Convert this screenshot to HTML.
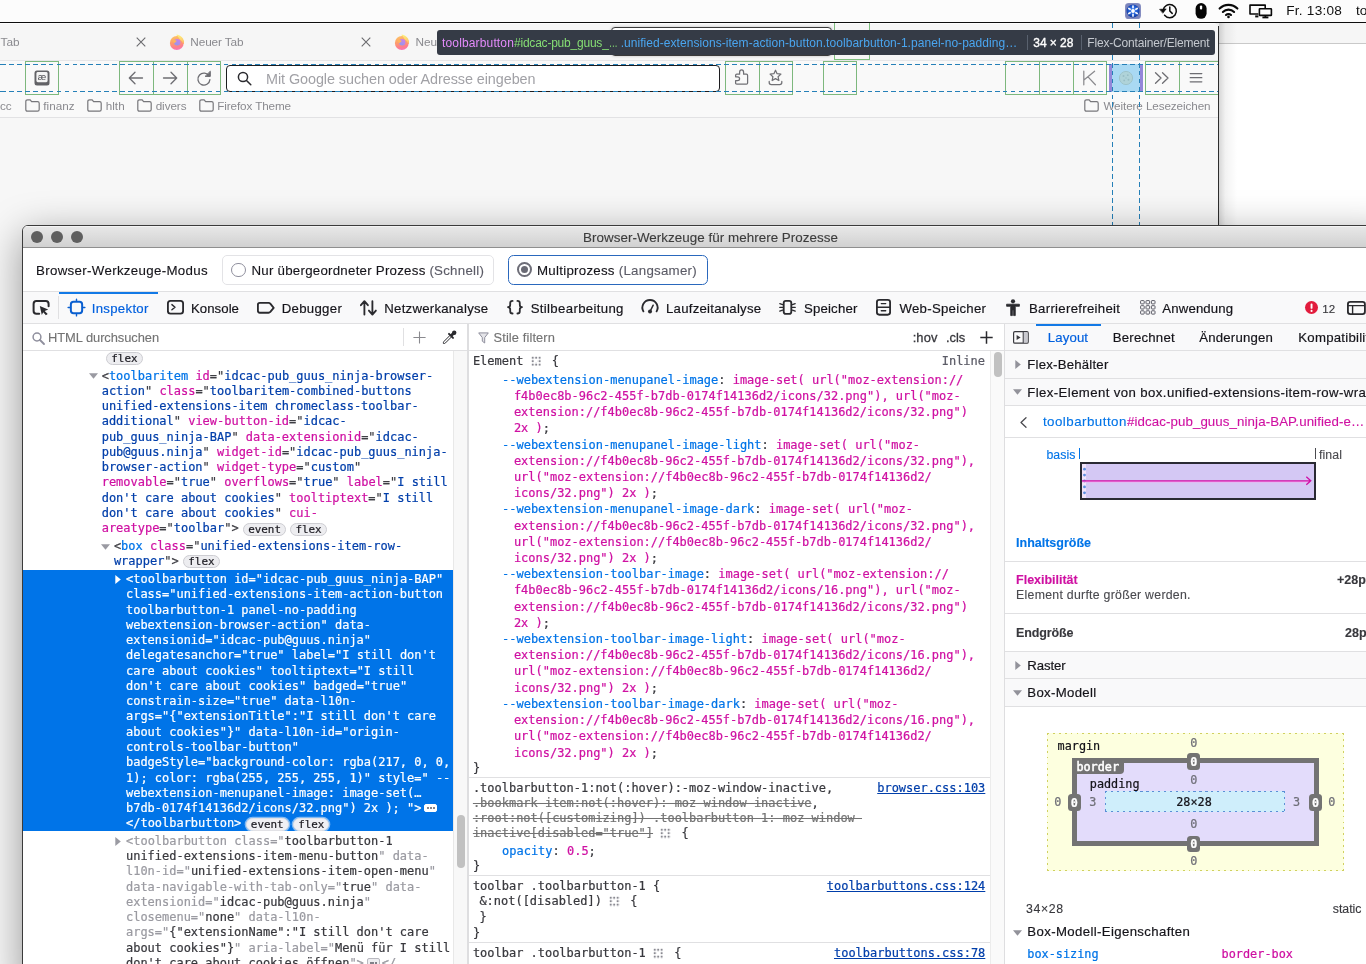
<!DOCTYPE html>
<html lang="de">
<head>
<meta charset="utf-8">
<title>Browser-Werkzeuge für mehrere Prozesse</title>
<style>
*{box-sizing:border-box}
html,body{margin:0;padding:0}
body{width:1366px;height:964px;position:relative;overflow:hidden;background:#ececec;font-family:"Liberation Sans",sans-serif;font-size:12px;color:#15141a;-webkit-font-smoothing:antialiased}
.abs{position:absolute}
#dt,#browser,#menubar{will-change:transform}
.t{position:absolute;white-space:nowrap;line-height:1}
.mono{font-family:"DejaVu Sans Mono","Liberation Mono",monospace}
svg{position:absolute;overflow:visible}
/* ---------- menubar ---------- */
#menubar{left:0;top:0;width:1366px;height:22px;background:#fcfcfc}
#menuline{left:0;top:22px;width:1366px;height:1px;background:#0e0e0e}
/* ---------- back window (right) ---------- */
#backwin{left:1219px;top:23px;width:147px;height:202px;background:#fff}
#backwin .bar{left:0;top:0;width:147px;height:21px;background:#f6f6f6;border-bottom:1px solid #c9c9c9}
#backwin .sh{left:0;top:0;width:18px;height:202px;background:linear-gradient(90deg,rgba(0,0,0,.16),rgba(0,0,0,.05) 35%,rgba(0,0,0,0))}
/* ---------- browser window ---------- */
#browser{left:0;top:23px;width:1218px;height:960px;background:#f7f7f7;border-top-right-radius:5px;overflow:hidden}
#browser-edge{left:1218px;top:26px;width:1px;height:940px;background:#2e2e2e}
.bt{color:#8a8a8f;font-size:11.8px}
.gbox{position:absolute;top:38px;height:34px;border:1px solid #7db87d}
.hdash{position:absolute;left:0;width:1218px;height:1px;background:repeating-linear-gradient(90deg,#2580b8 0 4.8px,transparent 4.8px 7.95px) 1px 0}
.vdash{position:absolute;top:0;height:202px;width:1px;background:repeating-linear-gradient(180deg,#2580b8 0 4.8px,transparent 4.8px 7.95px)}
#infobar{left:437px;top:7px;width:778px;height:25px;background:#353b46;border-radius:3px}
#infobar .t{top:6.5px;font-size:12px}
/* ---------- devtools window ---------- */
#dt{left:22px;top:225px;width:1376px;height:760px;background:#fff;border:1px solid #3b3b3b;border-radius:6px 6px 0 0;overflow:hidden;box-shadow:0 10px 40px rgba(0,0,0,.4)}
#dtshadow{display:none}
#titlebar{left:0;top:0;width:1376px;height:22px;background:linear-gradient(#e8e8e8,#d1d1d1);border-bottom:1px solid #8f8f8f;box-shadow:inset 0 1px 0 #f4f4f4}
.tl{position:absolute;top:5px;width:12px;height:12px;border-radius:50%;background:#5f5f5f}
.tab{font-size:13.2px;letter-spacing:.25px}
.sh{font-size:13.2px;color:#15141a;letter-spacing:.25px}
.b{font-weight:bold}
.mk{position:absolute;white-space:pre;font-family:"DejaVu Sans Mono","Liberation Mono",monospace;font-size:11.97px;line-height:15.27px;color:#4a4a4f}
.mk .p{color:#3e3e44}.mk .tg{color:#0074e8}.mk .an{color:#cf10a2}.mk .av{color:#003eaa}
.mk.sel,.mk.sel span{color:#fff}
.mk.hid,.mk.hid .p,.mk.hid .tg,.mk.hid .an{color:#9a9aa1}.mk.hid .av{color:#38383d}
.bdg{display:inline-block;height:13px;line-height:11.5px;font-size:10.9px;padding:0 4px;margin-left:4.5px;border:1px solid #cdcdd2;border-radius:7px;background:#ededf0;color:#1c1b22!important;vertical-align:-0.3px;margin-right:0}
.mk.sel .bdg{background:#f0f0f4;border-color:#e2e2e6;color:#1c1b22!important;box-shadow:0 0 0 1.3px rgba(255,255,255,.5)}
.ell{display:inline-block;width:13px;height:8.5px;border-radius:2px;background:#ededf0;border:1px solid #b9b9c0;margin:0 2px 0 3px;vertical-align:0;position:relative}
.ell i{position:absolute;top:2.3px;width:2px;height:2px;border-radius:50%;background:#5b5b66}
.ell i:nth-child(1){left:1.7px}.ell i:nth-child(2){left:4.6px}.ell i:nth-child(3){left:7.5px}
.mk.sel .ell{background:#fff;border-color:#fff}
.rl{position:absolute;white-space:pre;font-size:11.97px;line-height:16px;color:#38383d}
.rl .pn{color:#0074e8}.rl .pv{color:#cf10a2}.rl .pc{color:#38383d}
.rl .un{color:#737373;text-decoration:line-through}
.rl.lnk{color:#003eaa;text-decoration:underline}
.grip{display:inline-block;width:10.4px;height:10.4px;margin:0 3.6px 0 0;vertical-align:-1.5px;background:linear-gradient(#fff,#fff) center/3.4px 3.4px no-repeat,radial-gradient(circle,#8a8a92 0 1.15px,transparent 1.4px) 0 0/3.467px 3.467px}
.bm{font-size:11.8px}
.bm.dk{color:#15141a}.bm.gr{color:#6f6f78}.bm.wh{color:#fff}.bm.bold{font-weight:bold}
.mk,.rl,.bm{-webkit-text-stroke:.22px currentColor}
#dt .t{-webkit-text-stroke:.12px currentColor}
#dt .t.mono,#dt .bm{-webkit-text-stroke:.22px currentColor}
#sHov,#sCls{-webkit-text-stroke:.3px currentColor!important}
#dt .sh,#dt .tab{-webkit-text-stroke:.18px currentColor}
#dt .bm.sb{-webkit-text-stroke:.5px #fff}
#wtitle{letter-spacing:0.039px}
#modelabel{letter-spacing:0.324px}
#m1{letter-spacing:0.240px}
#m2{letter-spacing:0.262px}
#tI{letter-spacing:0.306px}
#tK{letter-spacing:0.047px}
#tD{letter-spacing:0.310px}
#tN{letter-spacing:0.245px}
#tS{letter-spacing:0.341px}
#tL{letter-spacing:0.250px}
#tSp{letter-spacing:0.180px}
#tW{letter-spacing:0.281px}
#tB{letter-spacing:0.300px}
#tA{letter-spacing:0.148px}
#sHtml{letter-spacing:-0.057px}
#sStile{letter-spacing:0.101px}
#sHov{letter-spacing:0.106px}
#sCls{letter-spacing:-0.011px}
#sL{letter-spacing:0.148px}
#sB{letter-spacing:0.231px}
#sA{letter-spacing:0.183px}
#hFB{letter-spacing:0.213px}
#fbasis{letter-spacing:0.096px}
#ffinal{letter-spacing:0.107px}
#fInh{letter-spacing:-0.010px}
#fFlex{letter-spacing:-0.019px}
#fEl{letter-spacing:0.273px}
#fEnd{letter-spacing:-0.155px}
#hR{letter-spacing:-0.091px}
#hBM{letter-spacing:0.323px}
#f34{letter-spacing:0.651px}
#hBME{letter-spacing:0.373px}
#fsel{letter-spacing:0.199px}
#ib1{letter-spacing:0.149px}
#ib2{letter-spacing:-0.217px}
#ib3{letter-spacing:0.051px}
#ib4{letter-spacing:-0.054px}
#ib5{letter-spacing:-0.176px}
#tbN{letter-spacing:-0.124px}
#ph{letter-spacing:-0.065px}
#bkfi{letter-spacing:0.016px}
#bkhl{letter-spacing:0.035px}
#bkdi{letter-spacing:-0.065px}
#bkFi{letter-spacing:-0.111px}
#bkWe{letter-spacing:-0.097px}
#clk{letter-spacing:0.227px}
</style>
</head>
<body>
<div id="menubar" class="abs">
  <!-- blue fan icon -->
  <svg style="left:1125px;top:3px" width="16" height="16" viewBox="0 0 16 16"><defs><radialGradient id="fanG" cx=".5" cy=".45" r=".55"><stop offset="0" stop-color="#4a8df0"/><stop offset=".6" stop-color="#1f5ad0"/><stop offset="1" stop-color="#123a9a"/></radialGradient></defs><rect x="0" y="0" width="16" height="16" rx="3.6" fill="#8990c2"/><rect x=".8" y=".8" width="14.4" height="14.4" rx="3" fill="#7a84bc"/><circle cx="8" cy="8" r="6.5" fill="url(#fanG)"/><g stroke="#fff" stroke-width="1.7" stroke-linecap="round" opacity=".95"><path d="M8 3.1 V4.6"/><path d="M12.2 5.5 L10.9 6.3"/><path d="M12.2 10.5 L10.9 9.7"/><path d="M8 12.9 V11.4"/><path d="M3.8 10.5 L5.1 9.7"/><path d="M3.8 5.5 L5.1 6.3"/></g><circle cx="8" cy="8" r="1.9" fill="#fff"/></svg>
  <!-- time machine clock -->
  <svg style="left:1158px;top:2px" width="20" height="18" viewBox="0 0 20 18" fill="none" stroke="#0c0c0c" stroke-width="1.5" stroke-linecap="round" stroke-linejoin="round"><path d="M5.2 8.1 A6.6 6.6 0 1 1 6.6 13.2"/><path d="M1.9 7.3 L8.2 6.9 L5 11 Z" fill="#0c0c0c" stroke-width=".6"/><path d="M11.8 4.9 V9 L14.2 11.4"/></svg>
  <!-- mouse -->
  <svg style="left:1195px;top:3px" width="12" height="16" viewBox="0 0 12 16"><rect x=".6" y=".1" width="11" height="15.7" rx="5.5" fill="#050505"/><rect x="4.9" y="2.4" width="2.3" height="4.2" rx="1.1" fill="#fff"/></svg>
  <!-- wifi -->
  <svg style="left:1218px;top:3px" width="21" height="16" viewBox="0 0 21 16" fill="none" stroke="#0a0a0a" stroke-width="2.1" stroke-linecap="round"><path d="M1.6 5.6 A12.6 12.6 0 0 1 19.4 5.6"/><path d="M4.9 8.9 A8 8 0 0 1 16.1 8.9"/><path d="M8 12 A3.6 3.6 0 0 1 13 12"/><circle cx="10.5" cy="13.9" r=".6" fill="#0a0a0a" stroke-width="1.4"/></svg>
  <!-- displays -->
  <svg style="left:1248px;top:3px" width="25" height="16" viewBox="0 0 25 16" fill="none" stroke="#0a0a0a" stroke-width="1.6" stroke-linejoin="round"><path d="M10.4 11 H2 V2.1 H17.2 V5"/><path d="M7.2 13.4 H10.4" stroke-width="2"/><rect x="11.4" y="5.8" width="12" height="6.6" rx=".5" fill="#fcfcfc"/><path d="M14.4 14.4 H20.4" stroke-width="1.9"/><path d="M17.4 12.6 V14" stroke-width="1.8"/></svg>
  <div class="t" id="clk" style="left:1286.3px;top:4px;font-size:13.6px;color:#111">Fr. 13:08</div>
  <div class="t" style="left:1356px;top:4px;font-size:13.6px;color:#111">to</div>
</div>
<div id="menuline" class="abs"></div>

<div id="backwin" class="abs"><div class="bar abs"></div><div class="sh abs"></div></div>

<div id="browser" class="abs">
  <div class="abs" style="left:0;top:0;width:1218px;height:37px;background:#f6f6f6;border-top:1px solid #fdfdfd"></div>
  <div class="abs" style="left:0;top:38px;width:1218px;height:56px;background:#f9f9f9"></div>
  <!-- tab strip -->
  <div class="t bt" style="left:0.5px;top:13.8px">Tab</div>
  <svg style="left:136px;top:14px" width="10" height="10" viewBox="0 0 10 10" stroke="#6a6a6e" stroke-width="1.1" fill="none"><path d="M.7 .7 L9.3 9.3 M9.3 .7 L.7 9.3"/></svg>
  <svg class="ffx" style="left:169px;top:11px" width="16" height="16" viewBox="0 0 16 16"><defs><linearGradient id="fx1" x1=".3" y1="0" x2=".5" y2="1"><stop offset="0" stop-color="#ffb648"/><stop offset=".45" stop-color="#ff8a50"/><stop offset=".8" stop-color="#ff6478"/><stop offset="1" stop-color="#f85aa8"/></linearGradient><linearGradient id="fx2" x1="0" y1="0" x2="0" y2="1"><stop offset="0" stop-color="#fff36a"/><stop offset="1" stop-color="#ffb13c"/></linearGradient><linearGradient id="fx3" x1=".7" y1="0" x2=".2" y2="1"><stop offset="0" stop-color="#c565e8"/><stop offset="1" stop-color="#7a86ea"/></linearGradient></defs><g opacity=".82"><path d="M7.6 .4 Q12.2 1.2 14 4.6 Q15.6 7.6 15 10 L9 9 Z" fill="url(#fx2)"/><circle cx="7.8" cy="9" r="6.9" fill="url(#fx1)"/><path d="M8.2 1.2 Q12 2.2 13.6 5 Q15 7.6 14.6 10.2 Q13 6.6 10.8 5.4 Z" fill="url(#fx2)" opacity=".9"/><circle cx="8.2" cy="8.3" r="3.2" fill="url(#fx3)"/><path d="M2.6 5.6 Q5 5 7.8 6.9 L5.4 9.2 Q4 8.4 2.6 5.6 Z" fill="#ffa63e"/></g></svg>
  <div class="t bt" id="tbN" style="left:190.3px;top:13.8px">Neuer Tab</div>
  <svg style="left:361px;top:14px" width="10" height="10" viewBox="0 0 10 10" stroke="#6a6a6e" stroke-width="1.1" fill="none"><path d="M.7 .7 L9.3 9.3 M9.3 .7 L.7 9.3"/></svg>
  <svg class="ffx" style="left:394px;top:11px" width="16" height="16" viewBox="0 0 16 16"><g opacity=".82"><path d="M7.6 .4 Q12.2 1.2 14 4.6 Q15.6 7.6 15 10 L9 9 Z" fill="url(#fx2)"/><circle cx="7.8" cy="9" r="6.9" fill="url(#fx1)"/><path d="M8.2 1.2 Q12 2.2 13.6 5 Q15 7.6 14.6 10.2 Q13 6.6 10.8 5.4 Z" fill="url(#fx2)" opacity=".9"/><circle cx="8.2" cy="8.3" r="3.2" fill="url(#fx3)"/><path d="M2.6 5.6 Q5 5 7.8 6.9 L5.4 9.2 Q4 8.4 2.6 5.6 Z" fill="#ffa63e"/></g></svg>
  <div class="t bt" style="left:415.4px;top:13.8px">Neu</div>
  <!-- selected tab outline hidden behind the info bar + newtab green box -->
  <div class="abs" style="left:611px;top:4px;width:221px;height:29px;border:1px solid #3a3a3a;border-radius:4px;background:#fff;box-shadow:0 0 3px rgba(0,0,0,.25)"></div>
  <div class="abs" style="left:834px;top:0;width:36px;height:37px;border:1px solid rgba(96,176,96,.8);border-top:0"></div>
  <!-- nav toolbar -->
  <div class="abs" style="left:0;top:37px;width:1218px;height:1px;background:#e6e6e8"></div>
  <!-- urlbar -->
  <div class="abs" style="left:226px;top:42px;width:494px;height:27px;border:1px solid #1c1c1f;border-radius:4px;background:#fff"></div>
  <svg style="left:237px;top:48px" width="15" height="15" viewBox="0 0 15 15" fill="none" stroke="#2a2a2e" stroke-width="1.5" stroke-linecap="round"><circle cx="6" cy="6" r="4.6"/><path d="M9.5 9.5 L13.8 13.8"/></svg>
  <div class="t" id="ph" style="left:266px;top:48.7px;font-size:14.4px;color:#a1a1a6">Mit Google suchen oder Adresse eingeben</div>
  <!-- green flex item boxes -->
  <div class="gbox" style="left:25px;width:34px"></div>
  <div class="gbox" style="left:119px;width:35px"></div>
  <div class="gbox" style="left:153px;width:35px"></div>
  <div class="gbox" style="left:187px;width:34px"></div>
  <div class="gbox" style="left:725px;width:35px"></div>
  <div class="gbox" style="left:759px;width:34px"></div>
  <div class="gbox" style="left:823px;width:34px"></div>
  <div class="gbox" style="left:1005px;width:35px"></div>
  <div class="gbox" style="left:1039px;width:35px"></div>
  <div class="gbox" style="left:1073px;width:34px"></div>
  <div class="gbox" style="left:1145px;width:35px"></div>
  <div class="gbox" style="left:1179px;width:40px"></div>
  <!-- highlighted element -->
  <div class="abs" style="left:1109px;top:41px;width:34px;height:28px;background:#a9d9f3;border-left:3.3px solid #9387d9;border-right:3.3px solid #9387d9"></div>
  <svg style="left:1118px;top:47px" width="16" height="16" viewBox="0 0 16 16" opacity=".38"><circle cx="8" cy="8" r="6.6" fill="#b9cbb0" stroke="#8aa08a" stroke-width="1"/><g fill="#7d917d"><circle cx="5.5" cy="6" r="1"/><circle cx="9.8" cy="5.2" r=".9"/><circle cx="10.5" cy="9.8" r="1"/><circle cx="6.2" cy="10.4" r=".9"/><circle cx="8" cy="8" r=".7"/></g></svg>
  <!-- icons -->
  <svg style="left:33px;top:46px" width="18" height="18" viewBox="0 0 18 18"><rect x="1.5" y="1.5" width="15" height="15" rx="2.5" fill="#626266"/><rect x="3.4" y="3" width="11.2" height="10.2" rx="1.4" fill="#f4f4f4"/><text x="9" y="11.2" font-size="9.5" text-anchor="middle" fill="#4a4a4f" font-family="Liberation Sans,sans-serif">æ</text></svg>
  <svg style="left:128px;top:48px" width="16" height="14" viewBox="0 0 16 14" fill="none" stroke="#6d6d72" stroke-width="1.3" stroke-linecap="round" stroke-linejoin="round"><path d="M14.5 7 H1.5 M7 1.2 L1.3 7 L7 12.8"/></svg>
  <svg style="left:162px;top:48px" width="16" height="14" viewBox="0 0 16 14" fill="none" stroke="#6d6d72" stroke-width="1.3" stroke-linecap="round" stroke-linejoin="round"><path d="M1.5 7 H14.5 M9 1.2 L14.7 7 L9 12.8"/></svg>
  <svg style="left:196px;top:47px" width="16" height="16" viewBox="0 0 16 16" fill="none" stroke="#6d6d72" stroke-width="1.3" stroke-linecap="round"><path d="M13.2 6.2 A6 6 0 1 0 13.9 9.6"/><path d="M14.3 1.6 V6.4 H9.5 Z" fill="#6d6d72" stroke-linejoin="round" stroke-width="1"/></svg>
  <svg style="left:734.4px;top:46.1px" width="16" height="16" viewBox="0 0 16 16" fill="none" stroke="#707075" stroke-width="1.25" stroke-linejoin="round"><path d="M2.8 5.2 H5.6 V3.4 Q5.6 .9 7.6 .9 Q9.6 .9 9.6 3.4 V5.2 H12.4 Q13.6 5.2 13.6 6.4 V14 Q13.6 15.2 12.4 15.2 H2.8 Q1.6 15.2 1.6 14 V11.6 H3.4 Q5.6 11.6 5.6 9.7 Q5.6 7.8 3.4 7.8 H1.6 V6.4 Q1.6 5.2 2.8 5.2 Z"/></svg>
  <svg style="left:767px;top:46px" width="17" height="17" viewBox="0 0 17 17" fill="none" stroke="#707075" stroke-width="1.25" stroke-linejoin="round" stroke-linecap="round"><path d="M8.50 1.20 L10.09 4.72 L13.92 5.14 L11.07 7.73 L11.85 11.51 L8.50 9.60 L5.15 11.51 L5.93 7.73 L3.08 5.14 L6.91 4.72 Z"/><path d="M2.2 12.4 V13.4 Q2.2 15.5 4.3 15.5 H12.7 Q14.8 15.5 14.8 13.4 V12.4"/></svg>
  <svg style="left:1082px;top:47px" width="15" height="16" viewBox="0 0 15 16" fill="none" stroke="#8a8a8e" stroke-width="1.25" stroke-linecap="round" stroke-linejoin="round"><path d="M1.8 1.2 V14.8 M2.2 9.8 L12.6 1.2 M6 6.9 L13.4 14.8"/></svg>
  <svg style="left:1154px;top:49px" width="16" height="12" viewBox="0 0 16 12" fill="none" stroke="#6d6d72" stroke-width="1.3" stroke-linecap="round" stroke-linejoin="round"><path d="M1.5 .8 L7 6 L1.5 11.2 M8.5 .8 L14 6 L8.5 11.2"/></svg>
  <svg style="left:1189px;top:49px" width="14" height="12" viewBox="0 0 14 12" fill="none" stroke="#6d6d72" stroke-width="1.3" stroke-linecap="round"><path d="M1.2 1.6 H12.8 M1.2 5.7 H12.8 M1.2 9.8 H12.8"/></svg>
  <!-- bookmarks bar -->
  <div class="t bt" style="left:0;top:77px;font-size:11.7px">cc</div>
  <svg class="fold" style="left:25px;top:76px" width="15" height="13" viewBox="0 0 15 13" fill="none" stroke="#77777b" stroke-width="1.2" stroke-linejoin="round"><path d="M.8 2.6 Q.8 .8 2.6 .8 H5.2 L6.6 2.6 H12.6 Q14.2 2.6 14.2 4.2 V10.6 Q14.2 12.2 12.6 12.2 H2.4 Q.8 12.2 .8 10.6 Z"/></svg>
  <div class="t bt" id="bkfi" style="left:43.3px;top:77px;font-size:11.7px">finanz</div>
  <svg class="fold" style="left:87px;top:76px" width="15" height="13" viewBox="0 0 15 13" fill="none" stroke="#77777b" stroke-width="1.2" stroke-linejoin="round"><path d="M.8 2.6 Q.8 .8 2.6 .8 H5.2 L6.6 2.6 H12.6 Q14.2 2.6 14.2 4.2 V10.6 Q14.2 12.2 12.6 12.2 H2.4 Q.8 12.2 .8 10.6 Z"/></svg>
  <div class="t bt" id="bkhl" style="left:105.7px;top:77px;font-size:11.7px">hlth</div>
  <svg class="fold" style="left:137px;top:76px" width="15" height="13" viewBox="0 0 15 13" fill="none" stroke="#77777b" stroke-width="1.2" stroke-linejoin="round"><path d="M.8 2.6 Q.8 .8 2.6 .8 H5.2 L6.6 2.6 H12.6 Q14.2 2.6 14.2 4.2 V10.6 Q14.2 12.2 12.6 12.2 H2.4 Q.8 12.2 .8 10.6 Z"/></svg>
  <div class="t bt" id="bkdi" style="left:155.7px;top:77px;font-size:11.7px">divers</div>
  <svg class="fold" style="left:199px;top:76px" width="15" height="13" viewBox="0 0 15 13" fill="none" stroke="#77777b" stroke-width="1.2" stroke-linejoin="round"><path d="M.8 2.6 Q.8 .8 2.6 .8 H5.2 L6.6 2.6 H12.6 Q14.2 2.6 14.2 4.2 V10.6 Q14.2 12.2 12.6 12.2 H2.4 Q.8 12.2 .8 10.6 Z"/></svg>
  <div class="t bt" id="bkFi" style="left:217.3px;top:77px;font-size:11.7px">Firefox Theme</div>
  <svg class="fold" style="left:1084px;top:76px" width="15" height="13" viewBox="0 0 15 13" fill="none" stroke="#77777b" stroke-width="1.2" stroke-linejoin="round"><path d="M.8 2.6 Q.8 .8 2.6 .8 H5.2 L6.6 2.6 H12.6 Q14.2 2.6 14.2 4.2 V10.6 Q14.2 12.2 12.6 12.2 H2.4 Q.8 12.2 .8 10.6 Z"/></svg>
  <div class="t bt" id="bkWe" style="left:1103.4px;top:77px;font-size:11.7px">Weitere Lesezeichen</div>
  <div class="abs" style="left:0;top:94px;width:1218px;height:1px;background:#e2e2e4"></div>
  <!-- highlighter guides -->
  <div class="hdash" style="top:41px"></div>
  <div class="hdash" style="top:68px"></div>
  <div class="vdash" style="left:1112px"></div>
  <div class="vdash" style="left:1139px"></div>
  <!-- info bar -->
  <div id="infobar" class="abs">
    <div class="t" id="ib1" style="left:5px;color:#e48bfb">toolbarbutton</div>
    <div class="t" id="ib2" style="left:77px;color:#86de74">#idcac-pub_guus_<span style="display:inline-block;transform:scaleX(.72);transform-origin:0 50%;margin-right:-3.4px">…</span></div>
    <div class="t" id="ib3" style="left:183.7px;color:#4aa6f0">.unified-extensions-item-action-button.toolbarbutton-1.panel-no-padding…</div>
    <div class="abs" style="left:590px;top:5px;width:1px;height:15px;background:#59616e"></div>
    <div class="t" id="ib4" style="left:596.3px;color:#fff;-webkit-text-stroke:.35px #fff">34 × 28</div>
    <div class="abs" style="left:644px;top:5px;width:1px;height:15px;background:#59616e"></div>
    <div class="t" id="ib5" style="left:650.3px;color:#c5c9cf">Flex-Container/Element</div>
  </div>
</div>
<div id="browser-edge" class="abs"></div>

<div id="dtshadow" class="abs"></div>
<div id="dt" class="abs">
<div id="titlebar" class="abs"></div>
<div class="tl" style="left:8px"></div>
<div class="tl" style="left:28px"></div>
<div class="tl" style="left:48px"></div>
<div class="t" id="wtitle" style="left:560px;top:5px;font-size:13.4px;color:#3c3c3c">Browser-Werkzeuge für mehrere Prozesse</div>
<div class="t" style="left:13px;top:37.5px;font-size:13.3px;color:#15141a" id="modelabel">Browser-Werkzeuge-Modus</div>
<div class="abs" style="left:199px;top:29px;width:272px;height:30px;border:1px solid #e3e3e6;border-radius:5px"></div>
<div class="abs" style="left:208px;top:36.6px;width:14.8px;height:14.8px;border:1.9px solid #8f8f9d;border-radius:50%;background:#fff"></div>
<div class="t" style="left:228.5px;top:37.5px;font-size:13.3px" id="m1">Nur übergeordneter Prozess <span style="color:#5b5b66">(Schnell)</span></div>
<div class="abs" style="left:485px;top:29px;width:200px;height:30px;border:1.5px solid #2a68bd;border-radius:5.5px"></div>
<div class="abs" style="left:494px;top:36.2px;width:14.8px;height:14.8px;border:2px solid #6e6e78;border-radius:50%;background:#fff"></div>
<div class="abs" style="left:497.6px;top:39.8px;width:7.6px;height:7.6px;border-radius:50%;background:#6a6a74"></div>
<div class="t" style="left:514px;top:37.5px;font-size:13.3px" id="m2">Multiprozess <span style="color:#5b5b66">(Langsamer)</span></div>
<div class="abs" style="left:0;top:65px;width:1376px;height:33px;background:#f9f9fa;border-top:1px solid #e0e0e2;border-bottom:1px solid #e0e0e2"></div>
<div class="abs" style="left:36px;top:65.5px;width:99px;height:2px;background:#1279e6"></div>
<div class="abs" style="left:35px;top:70px;width:1px;height:23px;background:#e0e0e2"></div>
<div class="t tab" id="tI" style="left:68.7px;top:76px;color:#0060df">Inspektor</div>
<div class="t tab" id="tK" style="left:168px;top:76px;color:#15141a">Konsole</div>
<div class="t tab" id="tD" style="left:258.7px;top:76px;color:#15141a">Debugger</div>
<div class="t tab" id="tN" style="left:361.3px;top:76px;color:#15141a">Netzwerkanalyse</div>
<div class="t tab" id="tS" style="left:507.7px;top:76px;color:#15141a">Stilbearbeitung</div>
<div class="t tab" id="tL" style="left:643px;top:76px;color:#15141a">Laufzeitanalyse</div>
<div class="t tab" id="tSp" style="left:781px;top:76px;color:#15141a">Speicher</div>
<div class="t tab" id="tW" style="left:876.5px;top:76px;color:#15141a">Web-Speicher</div>
<div class="t tab" id="tB" style="left:1006px;top:76px;color:#15141a">Barrierefreiheit</div>
<div class="t tab" id="tA" style="left:1139.3px;top:76px;color:#15141a">Anwendung</div>
<div class="t" id="t12" style="left:1299.3px;top:76.8px;color:#38383d;font-size:11.6px">12</div>
<svg style="left:8.5px;top:74px" width="18" height="16" viewBox="0 0 18 16" ><path d="M7.2 13.8 H4.4 Q1.6 13.8 1.6 11 V3.9 Q1.6 1.1 4.4 1.1 H13.8 Q16.6 1.1 16.6 3.9 V6.2" fill="none" stroke="#2a2a2e" stroke-width="2" stroke-linecap="round"/><path d="M7.8 5.9 L16.2 9.6 L12.7 10.9 L15.7 14.1 L13.9 15.3 L11.2 12.2 L9.8 14.9 Z" fill="#2a2a2e"/></svg>
<svg style="left:45px;top:72.9px" width="17" height="17" viewBox="0 0 17 17" ><rect x="2.85" y="2.85" width="11.3" height="11.3" rx="2.7" fill="none" stroke="#0a5fd0" stroke-width="2"/><path d="M8.5 .1 V2 M8.5 15 V16.9 M.1 8.5 H2 M15 8.5 H16.9" stroke="#0a5fd0" stroke-width="1.4" stroke-linecap="round"/></svg>
<svg style="left:143.8px;top:74px" width="17" height="15" viewBox="0 0 17 15" ><rect x=".9" y=".9" width="15.2" height="12.7" rx="2.6" fill="none" stroke="#2a2a2e" stroke-width="1.85"/><path d="M4.9 4.6 L8 7.2 L4.9 9.8" fill="none" stroke="#2a2a2e" stroke-width="1.4" stroke-linecap="round" stroke-linejoin="round"/></svg>
<svg style="left:233.8px;top:75.8px" width="18" height="12" viewBox="0 0 18 12" ><path d="M2.8 .9 H11.6 Q12.6 .9 13.3 1.7 L16.7 5.8 L13.3 9.9 Q12.6 10.7 11.6 10.7 H2.8 Q.9 10.7 .9 8.8 V2.8 Q.9 .9 2.8 .9 Z" fill="none" stroke="#2a2a2e" stroke-width="1.85" stroke-linejoin="round"/></svg>
<svg style="left:337px;top:73.8px" width="17" height="16" viewBox="0 0 17 16" ><path d="M4.4 14.6 V1.6 M.9 5.2 L4.4 1.2 L7.9 5.2 M12.4 1.2 V14.2 M8.9 10.6 L12.4 14.6 L15.9 10.6" fill="none" stroke="#2a2a2e" stroke-width="1.85" stroke-linecap="round" stroke-linejoin="round"/></svg>
<svg style="left:484px;top:74.2px" width="16" height="15" viewBox="0 0 16 15" ><path d="M5.6 .9 Q3.2 .9 3.2 3.2 V5 Q3.2 7 1 7.2 Q3.2 7.4 3.2 9.4 V11.2 Q3.2 13.5 5.6 13.5 M10.4 .9 Q12.8 .9 12.8 3.2 V5 Q12.8 7 15 7.2 Q12.8 7.4 12.8 9.4 V11.2 Q12.8 13.5 10.4 13.5" fill="none" stroke="#2a2a2e" stroke-width="1.8" stroke-linecap="round" stroke-linejoin="round"/></svg>
<svg style="left:618.3px;top:73px" width="18" height="15" viewBox="0 0 18 15" ><path d="M2.4 12.4 A7.6 7.6 0 1 1 15.6 12.4" fill="none" stroke="#2a2a2e" stroke-width="1.85" stroke-linecap="round"/><path d="M9.3 12 L12.2 6.2" stroke="#2a2a2e" stroke-width="1.5" stroke-linecap="round"/><circle cx="9" cy="12.4" r="2" fill="#2a2a2e"/></svg>
<svg style="left:756.2px;top:74.2px" width="17" height="15" viewBox="0 0 17 15" ><rect x="4.7" y=".9" width="7.6" height="13" rx="2.2" fill="none" stroke="#2a2a2e" stroke-width="1.85"/><path d="M.8 3.6 L3.6 4.6 M.8 7.4 H3.6 M.8 11.2 L3.6 10.2 M16.2 3.6 L13.4 4.6 M16.2 7.4 H13.4 M16.2 11.2 L13.4 10.2" stroke="#2a2a2e" stroke-width="1.3" stroke-linecap="round"/></svg>
<svg style="left:853.3px;top:73.2px" width="15" height="17" viewBox="0 0 15 17" ><rect x=".9" y=".9" width="13.2" height="14.8" rx="2.4" fill="none" stroke="#2a2a2e" stroke-width="1.85"/><path d="M1 8.3 H14" stroke="#2a2a2e" stroke-width="1.5"/><path d="M5.3 4.6 H9.7 M5.3 11.8 H9.7" stroke="#2a2a2e" stroke-width="1.4" stroke-linecap="round"/></svg>
<svg style="left:983px;top:72.6px" width="14" height="17" viewBox="0 0 14 17" ><circle cx="7" cy="2.3" r="2.1" fill="#2a2a2e"/><path d="M.6 5.2 H13.4 V7.3 H9.3 V16.6 H7.6 V11.6 H6.4 V16.6 H4.7 V7.3 H.6 Z" fill="#2a2a2e" stroke="#2a2a2e" stroke-width=".8" stroke-linejoin="round"/></svg>
<svg style="left:1117px;top:74.4px" width="16" height="15" viewBox="0 0 16 15" ><g fill="none" stroke="#5b5b66" stroke-width="1"><rect x="0.6" y="0.6" width="3.6" height="3.3" rx=".6"/><rect x="0.6" y="5.699999999999999" width="3.6" height="3.3" rx=".6"/><rect x="0.6" y="10.799999999999999" width="3.6" height="3.3" rx=".6"/><rect x="6.0" y="0.6" width="3.6" height="3.3" rx=".6"/><rect x="6.0" y="5.699999999999999" width="3.6" height="3.3" rx=".6"/><rect x="6.0" y="10.799999999999999" width="3.6" height="3.3" rx=".6"/><rect x="11.4" y="0.6" width="3.6" height="3.3" rx=".6"/><rect x="11.4" y="5.699999999999999" width="3.6" height="3.3" rx=".6"/><rect x="11.4" y="10.799999999999999" width="3.6" height="3.3" rx=".6"/></g></svg>
<svg style="left:1282px;top:75.3px" width="13" height="13" viewBox="0 0 13 13" ><circle cx="6.5" cy="6.5" r="6.5" fill="#e21c3d"/><rect x="5.6" y="2.5" width="1.9" height="5.3" rx=".9" fill="#fff"/><circle cx="6.55" cy="9.9" r="1.05" fill="#fff"/></svg>
<svg style="left:1324px;top:75px" width="19" height="14" viewBox="0 0 19 14" ><rect x=".9" y=".9" width="17" height="12.2" rx="2.4" fill="none" stroke="#2a2a2e" stroke-width="1.85"/><path d="M1 4.6 H18 M5.6 4.6 V13" stroke="#2a2a2e" stroke-width="1.4"/></svg>

<div class="abs" style="left:0;top:98px;width:1376px;height:27px;background:#fff;border-bottom:1px solid #e0e0e2"></div>
<div class="abs" style="left:982px;top:98px;width:400px;height:27px;background:#f9f9fa;border-bottom:1px solid #e0e0e2"></div>
<div class="t" id="sHtml" style="left:25px;top:105.5px;font-size:12.9px;color:#737373">HTML durchsuchen</div>
<div class="t" id="sStile" style="left:470.5px;top:105.5px;font-size:12.9px;color:#737373">Stile filtern</div>
<div class="t" id="sHov" style="left:889.7px;top:105.5px;font-size:12.9px;color:#38383d">:hov</div>
<div class="t" id="sCls" style="left:923px;top:105.5px;font-size:12.9px;color:#38383d">.cls</div>
<div class="abs" style="left:380px;top:102px;width:1px;height:18px;background:#e0e0e2"></div>
<div class="abs" style="left:1013px;top:98px;width:65px;height:2px;background:#1279e6"></div>
<div class="t tab" id="sL" style="left:1024.7px;top:105px;color:#0060df">Layout</div>
<div class="t tab" id="sB" style="left:1089.7px;top:105px;color:#15141a">Berechnet</div>
<div class="t tab" id="sA" style="left:1176.3px;top:105px;color:#15141a">Änderungen</div>
<div class="t tab" id="sK" style="left:1275.3px;top:105px;color:#15141a">Kompatibilität</div>
<svg style="left:9px;top:105.8px" width="13" height="13" viewBox="0 0 13 13" ><circle cx="5" cy="5" r="3.9" fill="none" stroke="#8f8f9d" stroke-width="1.5"/><path d="M8 8 L12 12" stroke="#8f8f9d" stroke-width="1.85" stroke-linecap="round"/></svg>
<svg style="left:390px;top:105px" width="13" height="13" viewBox="0 0 13 13" ><path d="M6.5 .4 V12.6 M.4 6.5 H12.6" stroke="#8a8a8f" stroke-width="1.1"/></svg>
<svg style="left:419px;top:104.2px" width="15" height="15" viewBox="0 0 15 15" ><path d="M8.2 5.2 L2 11.4 Q1.2 12.2 1.4 13.4 Q2.6 13.8 3.5 12.9 L9.7 6.7" fill="#fff" stroke="#2a2a2e" stroke-width="1"/><path d="M7 3.9 L11 7.9" stroke="#2a2a2e" stroke-width="2" stroke-linecap="round"/><path d="M9 5.8 L11.6 3.2" stroke="#2a2a2e" stroke-width="2.8"/><circle cx="12.2" cy="2.7" r="2.2" fill="#2a2a2e"/></svg>
<svg style="left:454.8px;top:105.5px" width="11" height="12" viewBox="0 0 11 12" ><path d="M.7 .9 H10.3 L6.7 5.6 V11 L4.3 9.2 V5.6 Z" fill="#e4e4e8" stroke="#8f8f9d" stroke-width="1" stroke-linejoin="round"/></svg>
<svg style="left:957px;top:105px" width="13" height="13" viewBox="0 0 13 13" ><path d="M6.5 .3 V12.7 M.3 6.5 H12.7" stroke="#2a2a2e" stroke-width="1.5"/></svg>
<svg style="left:989.6px;top:105.2px" width="16" height="13" viewBox="0 0 16 13" ><rect x=".6" y=".6" width="14.6" height="11.6" rx="1.3" fill="none" stroke="#38383d" stroke-width="1.2"/><rect x="10.2" y="1.2" width="4.4" height="10.4" fill="#c9c9cf"/><path d="M10.2 1 V12" stroke="#38383d" stroke-width="1"/><path d="M3.6 3.9 L7.6 6.4 L3.6 8.9 Z" fill="#38383d"/></svg>

<div class="abs" style="left:430px;top:125px;width:14px;height:640px;background:#f8f8f8;border-left:1px solid #e8e8e8"></div>
<div class="abs" style="left:444px;top:98px;width:2px;height:660px;background:#dedee0"></div>
<div class="abs" style="left:967px;top:125px;width:14px;height:640px;background:#fafafa;border-left:1px solid #ececec"></div>
<div class="abs" style="left:981px;top:98px;width:1px;height:660px;background:#dedee0"></div>
<div class="abs" style="left:434px;top:588.5px;width:8px;height:53px;border-radius:4px;background:#c1c1c1"></div>
<div class="abs" style="left:971px;top:126px;width:8px;height:25px;border-radius:4px;background:#c1c1c1"></div>
<div id="markup" class="abs" style="left:0;top:125px;width:430px;height:640px;overflow:hidden">
<div class="abs" style="left:0;top:-125px;width:430px;height:900px">
<div class="mk" style="left:78.8px;top:125.2px"><span class="bdg">flex</span></div>
<div class="mk " style="left:78.7px;top:142.6px"><span class="p">&lt;</span><span class="tg">toolbaritem</span> <span class="an">id</span><span class="p">="</span><span class="av">idcac-pub_guus_ninja-browser-
action</span><span class="p">"</span> <span class="an">class</span><span class="p">="</span><span class="av">toolbaritem-combined-buttons
unified-extensions-item chromeclass-toolbar-
additional</span><span class="p">"</span> <span class="an">view-button-id</span><span class="p">="</span><span class="av">idcac-
pub_guus_ninja-BAP</span><span class="p">"</span> <span class="an">data-extensionid</span><span class="p">="</span><span class="av">idcac-
pub@guus.ninja</span><span class="p">"</span> <span class="an">widget-id</span><span class="p">="</span><span class="av">idcac-pub_guus_ninja-
browser-action</span><span class="p">"</span> <span class="an">widget-type</span><span class="p">="</span><span class="av">custom</span><span class="p">"</span>
<span class="an">removable</span><span class="p">="</span><span class="av">true</span><span class="p">"</span> <span class="an">overflows</span><span class="p">="</span><span class="av">true</span><span class="p">"</span> <span class="an">label</span><span class="p">="</span><span class="av">I still
don't care about cookies</span><span class="p">"</span> <span class="an">tooltiptext</span><span class="p">="</span><span class="av">I still
don't care about cookies</span><span class="p">"</span> <span class="an">cui-
areatype</span><span class="p">="</span><span class="av">toolbar</span><span class="p">"</span><span class="p">&gt;</span><span class="bdg">event</span><span class="bdg">flex</span></div>
<svg style="left:65.5px;top:147.24px" width="9" height="6" viewBox="0 0 9 6"><path d="M0 .3 H9 L4.5 5.8Z" fill="#9a9aa2"/></svg>
<div class="mk " style="left:90.9px;top:312.9px"><span class="p">&lt;</span><span class="tg">box</span> <span class="an">class</span><span class="p">="</span><span class="av">unified-extensions-item-row-
wrapper</span><span class="p">"</span><span class="p">&gt;</span><span class="bdg">flex</span></div>
<svg style="left:78.1px;top:317.53px" width="9" height="6" viewBox="0 0 9 6"><path d="M0 .3 H9 L4.5 5.8Z" fill="#9a9aa2"/></svg>
<div class="abs" style="left:0;top:344px;width:430px;height:261px;background:#0074e8"></div>
<div class="mk sel" style="left:103px;top:346.1px"><span class="p">&lt;</span><span class="tg">toolbarbutton</span> <span class="an">id</span><span class="p">="</span><span class="av">idcac-pub_guus_ninja-BAP</span><span class="p">"</span>
<span class="an">class</span><span class="p">="</span><span class="av">unified-extensions-item-action-button
toolbarbutton-1 panel-no-padding
webextension-browser-action</span><span class="p">"</span> <span class="an">data-
extensionid</span><span class="p">="</span><span class="av">idcac-pub@guus.ninja</span><span class="p">"</span>
<span class="an">delegatesanchor</span><span class="p">="</span><span class="av">true</span><span class="p">"</span> <span class="an">label</span><span class="p">="</span><span class="av">I still don't
care about cookies</span><span class="p">"</span> <span class="an">tooltiptext</span><span class="p">="</span><span class="av">I still
don't care about cookies</span><span class="p">"</span> <span class="an">badged</span><span class="p">="</span><span class="av">true</span><span class="p">"</span>
<span class="an">constrain-size</span><span class="p">="</span><span class="av">true</span><span class="p">"</span> <span class="an">data-l10n-
args</span><span class="p">="</span><span class="av">{"extensionTitle":"I still don't care
about cookies"}</span><span class="p">"</span> <span class="an">data-l10n-id</span><span class="p">="</span><span class="av">origin-
controls-toolbar-button</span><span class="p">"</span>
<span class="an">badgeStyle</span><span class="p">="</span><span class="av">background-color: rgba(217, 0, 0,
1); color: rgba(255, 255, 255, 1)</span><span class="p">"</span> <span class="an">style</span><span class="p">="</span><span class="av"> --
webextension-menupanel-image: image-set(…
b7db-0174f14136d2/icons/32.png") 2x ); </span><span class="p">"</span><span class="p">&gt;</span><span class="ell"><i></i><i></i><i></i></span>
<span class="p">&lt;/</span><span class="tg">toolbarbutton</span><span class="p">&gt;</span><span class="bdg">event</span><span class="bdg">flex</span></div>
<svg style="left:92.0px;top:349.24px" width="6" height="9" viewBox="0 0 6 9"><path d="M.3 0 V9 L5.8 4.5Z" fill="#fff"/></svg>
<div class="mk hid" style="left:103px;top:607.8px"><span class="p">&lt;</span><span class="tg">toolbarbutton</span> <span class="an">class</span><span class="p">="</span><span class="av">toolbarbutton-1
unified-extensions-item-menu-button</span><span class="p">"</span> <span class="an">data-
l10n-id</span><span class="p">="</span><span class="av">unified-extensions-item-open-menu</span><span class="p">"</span>
<span class="an">data-navigable-with-tab-only</span><span class="p">="</span><span class="av">true</span><span class="p">"</span> <span class="an">data-
extensionid</span><span class="p">="</span><span class="av">idcac-pub@guus.ninja</span><span class="p">"</span>
<span class="an">closemenu</span><span class="p">="</span><span class="av">none</span><span class="p">"</span> <span class="an">data-l10n-
args</span><span class="p">="</span><span class="av">{"extensionName":"I still don't care
about cookies"}</span><span class="p">"</span> <span class="an">aria-label</span><span class="p">="</span><span class="av">Menü für I still
don't care about cookies öffnen</span><span class="p">"</span><span class="p">&gt;</span><span class="ell"><i></i><i></i><i></i></span><span class="p">&lt;/</span></div>
<svg style="left:92.0px;top:610.93px" width="6" height="9" viewBox="0 0 6 9"><path d="M.3 0 V9 L5.8 4.5Z" fill="#9a9aa2"/></svg>
</div></div>

<div id="rules" class="abs mono" style="left:446px;top:125px;width:521px;height:640px;overflow:hidden">
<div class="abs" style="left:-446px;top:-125px;width:1300px;height:900px">
<div class="rl sel" style="left:449.9px;top:126.8px">Element <span class="grip"></span> {</div>
<div class="rl" style="right:338px;top:126.8px;color:#5b5b66">Inline</div>
<div class="rl " style="left:479.1px;top:145.8px"><span class="pn">--webextension-menupanel-image</span><span class="pc">: </span><span class="pv">image-set( url("moz-extension://</span></div>
<div class="rl " style="left:490.9px;top:162.0px"><span class="pv">f4b0ec8b-96c2-455f-b7db-0174f14136d2/icons/32.png"), url("moz-</span></div>
<div class="rl " style="left:490.9px;top:178.21px"><span class="pv">extension://f4b0ec8b-96c2-455f-b7db-0174f14136d2/icons/32.png")</span></div>
<div class="rl " style="left:490.9px;top:194.42px"><span class="pv">2x )</span><span class="pc">;</span></div>
<div class="rl " style="left:479.1px;top:210.62px"><span class="pn">--webextension-menupanel-image-light</span><span class="pc">: </span><span class="pv">image-set( url("moz-</span></div>
<div class="rl " style="left:490.9px;top:226.82px"><span class="pv">extension://f4b0ec8b-96c2-455f-b7db-0174f14136d2/icons/32.png"),</span></div>
<div class="rl " style="left:490.9px;top:243.03px"><span class="pv">url("moz-extension://f4b0ec8b-96c2-455f-b7db-0174f14136d2/</span></div>
<div class="rl " style="left:490.9px;top:259.24px"><span class="pv">icons/32.png") 2x )</span><span class="pc">;</span></div>
<div class="rl " style="left:479.1px;top:275.44px"><span class="pn">--webextension-menupanel-image-dark</span><span class="pc">: </span><span class="pv">image-set( url("moz-</span></div>
<div class="rl " style="left:490.9px;top:291.64px"><span class="pv">extension://f4b0ec8b-96c2-455f-b7db-0174f14136d2/icons/32.png"),</span></div>
<div class="rl " style="left:490.9px;top:307.85px"><span class="pv">url("moz-extension://f4b0ec8b-96c2-455f-b7db-0174f14136d2/</span></div>
<div class="rl " style="left:490.9px;top:324.05px"><span class="pv">icons/32.png") 2x )</span><span class="pc">;</span></div>
<div class="rl " style="left:479.1px;top:340.26px"><span class="pn">--webextension-toolbar-image</span><span class="pc">: </span><span class="pv">image-set( url("moz-extension://</span></div>
<div class="rl " style="left:490.9px;top:356.47px"><span class="pv">f4b0ec8b-96c2-455f-b7db-0174f14136d2/icons/16.png"), url("moz-</span></div>
<div class="rl " style="left:490.9px;top:372.67px"><span class="pv">extension://f4b0ec8b-96c2-455f-b7db-0174f14136d2/icons/32.png")</span></div>
<div class="rl " style="left:490.9px;top:388.88px"><span class="pv">2x )</span><span class="pc">;</span></div>
<div class="rl " style="left:479.1px;top:405.08px"><span class="pn">--webextension-toolbar-image-light</span><span class="pc">: </span><span class="pv">image-set( url("moz-</span></div>
<div class="rl " style="left:490.9px;top:421.28px"><span class="pv">extension://f4b0ec8b-96c2-455f-b7db-0174f14136d2/icons/16.png"),</span></div>
<div class="rl " style="left:490.9px;top:437.49px"><span class="pv">url("moz-extension://f4b0ec8b-96c2-455f-b7db-0174f14136d2/</span></div>
<div class="rl " style="left:490.9px;top:453.69px"><span class="pv">icons/32.png") 2x )</span><span class="pc">;</span></div>
<div class="rl " style="left:479.1px;top:469.9px"><span class="pn">--webextension-toolbar-image-dark</span><span class="pc">: </span><span class="pv">image-set( url("moz-</span></div>
<div class="rl " style="left:490.9px;top:486.11px"><span class="pv">extension://f4b0ec8b-96c2-455f-b7db-0174f14136d2/icons/16.png"),</span></div>
<div class="rl " style="left:490.9px;top:502.31px"><span class="pv">url("moz-extension://f4b0ec8b-96c2-455f-b7db-0174f14136d2/</span></div>
<div class="rl " style="left:490.9px;top:518.51px"><span class="pv">icons/32.png") 2x )</span><span class="pc">;</span></div>
<div class="rl sel" style="left:449.9px;top:533.8px">}</div>
<div class="abs" style="left:446px;top:550.5px;width:521px;height:1px;background:#e0e0e2"></div>
<div class="rl sel" style="left:449.9px;top:553.9px">.toolbarbutton-1:not(:hover):-moz-window-inactive,</div>
<div class="rl lnk" style="right:337.70000000000005px;top:553.9px">browser.css:103</div>
<div class="rl sel" style="left:449.9px;top:569.0px"><span class="un">.bookmark-item:not(:hover):-moz-window-inactive</span>,</div>
<div class="rl sel" style="left:449.9px;top:583.8px"><span class="un">:root:not([customizing]) .toolbarbutton-1:-moz-window-</span></div>
<div class="rl sel" style="left:449.9px;top:599.0px"><span class="un">inactive[disabled="true"]</span> <span class="grip"></span> {</div>
<div class="rl " style="left:479.1px;top:616.8px"><span class="pn">opacity</span><span class="pc">: </span><span class="pv">0.5</span><span class="pc">;</span></div>
<div class="rl sel" style="left:449.9px;top:632.0px">}</div>
<div class="abs" style="left:446px;top:649px;width:521px;height:1px;background:#e0e0e2"></div>
<div class="rl sel" style="left:449.9px;top:651.9px">toolbar .toolbarbutton-1 {</div>
<div class="rl lnk" style="right:337.70000000000005px;top:651.9px">toolbarbuttons.css:124</div>
<div class="rl sel" style="left:456.4px;top:667.0px">&amp;:not([disabled]) <span class="grip"></span> {</div>
<div class="rl sel" style="left:456.4px;top:683.4px">}</div>
<div class="rl sel" style="left:449.9px;top:698.5px">}</div>
<div class="abs" style="left:446px;top:716px;width:521px;height:1px;background:#e0e0e2"></div>
<div class="rl sel" style="left:449.9px;top:719.2px">toolbar .toolbarbutton-1 <span class="grip"></span> {</div>
<div class="rl lnk" style="right:337.70000000000005px;top:719.2px">toolbarbuttons.css:78</div>
</div></div>

<div id="side" class="abs" style="left:982px;top:125px;width:400px;height:640px;overflow:hidden;background:#fff">
<div class="abs" style="left:-982px;top:-125px;width:1400px;height:900px">
<div class="abs" style="left:982px;top:125px;width:400px;height:28px;background:#f9f9fa;border-bottom:1px solid #e0e0e2"></div>
<svg style="left:992px;top:134.0px" width="6" height="9" viewBox="0 0 6 9"><path d="M.3 0 V9 L5.8 4.5Z" fill="#92929a"/></svg>
<div class="t sh" id="hFB" style="left:1004.3px;top:132.0px">Flex-Behälter</div>
<div class="abs" style="left:982px;top:153px;width:400px;height:27px;background:#f9f9fa;border-bottom:1px solid #e0e0e2"></div>
<svg style="left:990.2px;top:163.0px" width="9" height="6" viewBox="0 0 9 6"><path d="M0 .3 H9 L4.5 5.8Z" fill="#92929a"/></svg>
<div class="t sh" id="hFE" style="left:1004.3px;top:159.5px">Flex-Element von box.unified-extensions-item-row-wrapper</div>
<style>#hFE{letter-spacing:.40px}</style>
<svg style="left:997px;top:190.5px" width="7" height="11" viewBox="0 0 7 11" fill="none" stroke="#4a4a4f" stroke-width="1.3" stroke-linecap="round" stroke-linejoin="round"><path d="M6 .8 L1 5.5 L6 10.2"/></svg>
<div class="t" id="fsel" style="left:1019.9px;top:188.8px;font-size:13.3px"><span style="color:#0074e8;letter-spacing:.49px">toolbarbutton</span><span style="color:#cf10a2;letter-spacing:.095px">#idcac-pub_guus_ninja-BAP.unified-e…</span></div>
<div class="abs" style="left:982px;top:211px;width:400px;height:1px;background:#e0e0e2"></div>
<div class="t" id="fbasis" style="left:1023.4px;top:222.5px;font-size:12.3px;color:#0074e8">basis</div>
<div class="abs" style="left:1056.3px;top:222px;width:1px;height:11px;background:#0074e8"></div>
<div class="abs" style="left:1291.5px;top:222px;width:1px;height:11px;background:#4a4a4f"></div>
<div class="t" id="ffinal" style="left:1295.9px;top:222.5px;font-size:12.3px;color:#4a4a4f">final</div>
<div class="abs" style="left:1056.5px;top:236px;width:236px;height:38px;background:#d4c8f4;border:2px solid #2a2a33"></div>
<div class="abs" style="left:1058.5px;top:238px;width:4.6px;height:34px;background:#f1e3fa"></div>
<svg style="left:1057px;top:236px" width="236" height="38" viewBox="0 0 236 38"><g fill="#5b8de0"><circle cx="4.5" cy="7.2" r="1.4"/><circle cx="4.5" cy="13.1" r="1.4"/><circle cx="4.5" cy="19" r="1.4"/><circle cx="4.5" cy="24.9" r="1.4"/><circle cx="4.5" cy="30.8" r="1.4"/></g><path d="M2 19.8 H230" stroke="#ff9ef0" stroke-width="1"/><path d="M2 18.8 H230.5 M226.3 14.8 L230.8 18.8 L226.3 22.8" fill="none" stroke="#cf0fa6" stroke-width="1.3"/></svg>
<div class="t b" id="fInh" style="left:993.1px;top:311px;font-size:12.5px;color:#0074e8">Inhaltsgröße</div>
<div class="abs" style="left:982px;top:335px;width:400px;height:1px;background:#e0e0e2"></div>
<div class="t b" id="fFlex" style="left:993.1px;top:348px;font-size:12.5px;color:#cf10a2">Flexibilität</div>
<div class="t b" id="f28a" style="left:1314px;top:348px;font-size:12.5px;color:#38383d">+28px</div>
<div class="t" id="fEl" style="left:993.1px;top:362.7px;font-size:12.3px;color:#4a4a4f">Element durfte größer werden.</div>
<div class="abs" style="left:982px;top:387px;width:400px;height:1px;background:#e0e0e2"></div>
<div class="t b" id="fEnd" style="left:993.1px;top:401px;font-size:12.5px;color:#38383d">Endgröße</div>
<div class="t b" id="f28b" style="left:1322px;top:401px;font-size:12.5px;color:#38383d">28px</div>
<div class="abs" style="left:982px;top:425px;width:400px;height:1px;background:#e0e0e2"></div>
<div class="abs" style="left:982px;top:426px;width:400px;height:27px;background:#f9f9fa;border-bottom:1px solid #e0e0e2"></div>
<svg style="left:992px;top:434.5px" width="6" height="9" viewBox="0 0 6 9"><path d="M.3 0 V9 L5.8 4.5Z" fill="#92929a"/></svg>
<div class="t sh" id="hR" style="left:1004.3px;top:432.5px">Raster</div>
<div class="abs" style="left:982px;top:453px;width:400px;height:28px;background:#f9f9fa;border-bottom:1px solid #e0e0e2"></div>
<svg style="left:990.2px;top:463.5px" width="9" height="6" viewBox="0 0 9 6"><path d="M0 .3 H9 L4.5 5.8Z" fill="#92929a"/></svg>
<div class="t sh" id="hBM" style="left:1004.3px;top:460.0px">Box-Modell</div>
<div class="abs" style="left:1024px;top:506.5px;width:297px;height:138.5px;background:repeating-linear-gradient(90deg,#d0d060 0 1.8px,transparent 1.8px 5.9px) 0 0/100% 1px no-repeat,repeating-linear-gradient(90deg,#d0d060 0 1.8px,transparent 1.8px 5.9px) 0 100%/100% 1px no-repeat,repeating-linear-gradient(180deg,#d0d060 0 1.8px,transparent 1.8px 5.9px) 0 0/1px 100% no-repeat,repeating-linear-gradient(180deg,#d0d060 0 1.8px,transparent 1.8px 5.9px) 100% 0/1px 100% no-repeat,#fdffdf"></div>
<div class="abs" style="left:1049px;top:532px;width:246.5px;height:88px;background:#e3dcfb;border:5px solid #737373"></div>
<div class="abs" style="left:1082px;top:564.8px;width:180px;height:21.6px;background:repeating-linear-gradient(90deg,#5b8fd6 0 2.2px,transparent 2.2px 5.9px) 0 0/100% 1px no-repeat,repeating-linear-gradient(90deg,#5b8fd6 0 2.2px,transparent 2.2px 5.9px) 0 100%/100% 1px no-repeat,repeating-linear-gradient(180deg,#5b8fd6 0 2.2px,transparent 2.2px 5.9px) 0 0/1px 100% no-repeat,repeating-linear-gradient(180deg,#5b8fd6 0 2.2px,transparent 2.2px 5.9px) 100% 0/1px 100% no-repeat,#cfeefb"></div>
<div class="abs" style="left:1049px;top:532px;width:52px;height:15.6px;background:#737373;border-bottom-right-radius:4px"></div>
<div class="t mono bm dk" id=bmM style="left:1034.6px;top:514.9px">margin</div>
<div class="t mono bm wh sb" id=bmB style="left:1053.4px;top:535.6px">border</div>
<div class="t mono bm dk" id=bmP style="left:1066.8px;top:553.2px">padding</div>
<div class="t mono bm gr"  style="left:1170.7px;transform:translateX(-50%);top:511.7px">0</div>
<div class="t mono bm gr"  style="left:1170.7px;transform:translateX(-50%);top:630.4px">0</div>
<div class="t mono bm gr"  style="left:1034.8px;transform:translateX(-50%);top:571.4px">0</div>
<div class="t mono bm gr"  style="left:1308.7px;transform:translateX(-50%);top:571.4px">0</div>
<div class="t mono bm gr"  style="left:1170.7px;transform:translateX(-50%);top:548.6px">0</div>
<div class="t mono bm gr"  style="left:1170.7px;transform:translateX(-50%);top:592.6px">0</div>
<div class="t mono bm gr"  style="left:1069.8px;transform:translateX(-50%);top:571.4px">3</div>
<div class="t mono bm gr"  style="left:1273.6px;transform:translateX(-50%);top:571.4px">3</div>
<div class="t mono bm dk"  style="left:1171px;transform:translateX(-50%);top:571.2px">28×28</div>
<div class="abs" style="left:1164.4px;top:527.4px;width:12.8px;height:16.5px;border-radius:3.5px;background:#737373"></div>
<div class="t mono bm wh bold"  style="left:1170.8px;transform:translateX(-50%);top:530.7px">0</div>
<div class="abs" style="left:1164.4px;top:609.8px;width:12.8px;height:16.5px;border-radius:3.5px;background:#737373"></div>
<div class="t mono bm wh bold"  style="left:1170.8px;transform:translateX(-50%);top:613.1px">0</div>
<div class="abs" style="left:1045.0px;top:568.3px;width:12.8px;height:16.5px;border-radius:3.5px;background:#737373"></div>
<div class="t mono bm wh bold"  style="left:1051.4px;transform:translateX(-50%);top:571.6px">0</div>
<div class="abs" style="left:1286.1px;top:568.3px;width:12.8px;height:16.5px;border-radius:3.5px;background:#737373"></div>
<div class="t mono bm wh bold"  style="left:1292.5px;transform:translateX(-50%);top:571.6px">0</div>
<div class="t" id="f34" style="left:1003px;top:676.5px;font-size:12.3px;color:#38383d">34×28</div>
<div class="t" id="fstatic" style="left:1309.8px;top:676.5px;font-size:12.3px;color:#38383d">static</div>
<svg style="left:990.2px;top:703.5px" width="9" height="6" viewBox="0 0 9 6"><path d="M0 .3 H9 L4.5 5.8Z" fill="#92929a"/></svg>
<div class="t sh" id="hBME" style="left:1004.3px;top:699.2px">Box-Modell-Eigenschaften</div>
<div class="t mono" id="bxs" style="left:1004.3px;top:722.6px;font-size:11.85px;color:#0074e8">box-sizing</div>
<div class="t mono" id="bbx" style="left:1198.6px;top:722.6px;font-size:11.85px;color:#cf10a2">border-box</div>
</div></div>

</div>

</body>
</html>
